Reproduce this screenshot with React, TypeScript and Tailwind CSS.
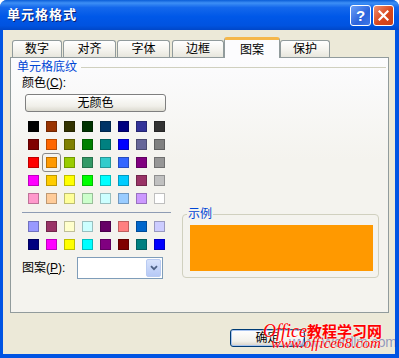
import React from 'react'

const FONT = { fontFamily: '"Liberation Sans", "Noto Sans CJK SC", sans-serif' }

// Excel 56-colour palette, as shown in the 图案 tab
const MAIN: string[][] = [
  ['#000000', '#993300', '#333300', '#003300', '#003366', '#000080', '#333399', '#333333'],
  ['#800000', '#FF6600', '#808000', '#008000', '#008080', '#0000FF', '#666699', '#808080'],
  ['#FF0000', '#FF9900', '#99CC00', '#339966', '#33CCCC', '#3366FF', '#800080', '#969696'],
  ['#FF00FF', '#FFCC00', '#FFFF00', '#00FF00', '#00FFFF', '#00CCFF', '#993366', '#C0C0C0'],
  ['#FF99CC', '#FFCC99', '#FFFF99', '#CCFFCC', '#CCFFFF', '#99CCFF', '#CC99FF', '#FFFFFF'],
]
const CHART: string[][] = [
  ['#9999FF', '#993366', '#FFFFCC', '#CCFFFF', '#660066', '#FF8080', '#0066CC', '#CCCCFF'],
  ['#000080', '#FF00FF', '#FFFF00', '#00FFFF', '#800080', '#800000', '#008080', '#0000FF'],
]

const TABS = [
  { label: '数字', w: 'w-[50px]', ml: 'ml-[9px]' },
  { label: '对齐', w: 'w-[53px]', ml: 'ml-[1px]' },
  { label: '字体', w: 'w-[53px]', ml: 'ml-[1px]' },
  { label: '边框', w: 'w-[52px]', ml: 'ml-[2px]' },
  { label: '图案', w: 'w-[56px]', ml: 'ml-0', active: true },
  { label: '保护', w: 'w-[50px]', ml: 'ml-0' },
]

function Swatch({ color, selected }: { color: string; selected?: boolean }) {
  return (
    <div className="relative w-[11px] h-[11px]">
      <div className="w-full h-full border border-black/25" style={{ backgroundColor: color }} />
      {selected && (
        <div className="absolute -inset-[4px] border border-[#8a8a8a] rounded-[3px]" />
      )}
    </div>
  )
}

function SwatchGrid({ rows, selectedIndex }: { rows: string[][]; selectedIndex?: number }) {
  return (
    <div className="ml-[6px] grid grid-cols-[repeat(8,11px)] gap-[7px]">
      {rows.flat().map((c, i) => (
        <Swatch key={i} color={c} selected={i === selectedIndex} />
      ))}
    </div>
  )
}

export default function App() {
  return (
    <div className="w-[399px] h-[358px] bg-[#0054E3] rounded-t-[7px] flex flex-col overflow-hidden" style={FONT}>
      {/* ── Title bar ─────────────────────────────────────────── */}
      <div className="h-[30px] flex items-center justify-between pl-[7px] pr-[5px] bg-[linear-gradient(to_bottom,#0A5DD8_0%,#3D8FF5_10%,#1468EC_25%,#0058E8_55%,#0053E0_85%,#0047C8_100%)]">
        <span className="text-white text-[13px] font-bold tracking-[1px] [text-shadow:1px_1px_0_#0A1E70]">单元格格式</span>
        <div className="flex gap-[2px]">
          <div className="w-[21px] h-[21px] rounded-[3px] border border-white flex items-center justify-center bg-[linear-gradient(135deg,#6CA0F7,#2B63DC_60%,#3E78E8)]">
            <span className="text-white text-[15px] font-bold leading-none">?</span>
          </div>
          <div className="w-[21px] h-[21px] rounded-[3px] border border-white flex items-center justify-center bg-[linear-gradient(135deg,#F09072,#D9471C_55%,#C8401A)]">
            <svg width="11" height="11" viewBox="0 0 11 11">
              <path d="M1.5 1.5 L9.5 9.5 M9.5 1.5 L1.5 9.5" stroke="white" strokeWidth="2.2" strokeLinecap="square" />
            </svg>
          </div>
        </div>
      </div>

      {/* ── Body ──────────────────────────────────────────────── */}
      <div className="relative ml-[3px] w-[392px] h-[324px] bg-[#ECE9D8] flex flex-col text-[12px] text-black">
        {/* Tabs */}
        <div className="flex items-end h-[20px] mt-[7px]">
          {TABS.map(t => (
            <div
              key={t.label}
              className={`${t.w} ${t.ml} flex items-center justify-center rounded-t-[3px] border-x border-t ${
                t.active
                  ? 'h-[21px] -mb-px relative z-10 bg-[#FCFCFE] border-[#919B9C] border-t-[3px] border-t-[#F5B74B] pt-[1px]'
                  : 'h-[17px] border-[#919B9C] bg-[linear-gradient(to_bottom,#FFFFFF,#F3F2EC_60%,#E7E6DD)]'
              }`}
            >
              {t.label}
            </div>
          ))}
        </div>

        {/* Tab panel */}
        <div className="ml-[7px] w-[379px] h-[256px] border border-[#919B9C] bg-[linear-gradient(to_bottom,#FCFCFE,#F4F3EE_40%)] flex flex-col">
          <div className="flex items-center h-[14px] mt-[2px] pl-[6px] pr-[2px]">
            <span className="text-[#0046D5]">单元格底纹</span>
            <div className="flex-1 h-px bg-[#D0D0BF] ml-[4px]" />
          </div>

          <div className="flex">
            {/* Left: colours */}
            <div className="w-[160px] pl-[11px] flex flex-col">
              <div className="h-[14px] mt-[2px] flex items-center">
                颜色(<span className="underline">C</span>):
              </div>
              <div className="ml-[3px] mt-[4px] w-[141px] h-[18px] rounded-[3px] border border-[#7F7F7F] bg-[linear-gradient(to_bottom,#FFFFFF,#F0EFE9_70%,#DCDAD0)] flex items-center justify-center">
                无颜色
              </div>
              <div className="mt-[9px]">
                <SwatchGrid rows={MAIN} selectedIndex={17} />
              </div>
              <div className="mt-[8px] w-[149px] h-px bg-[#8E9CB4]" />
              <div className="mt-[8px]">
                <SwatchGrid rows={CHART} />
              </div>
              <div className="mt-[7px] flex items-center">
                <span className="w-[55px]">
                  图案(<span className="underline">P</span>):
                </span>
                <div className="w-[86px] h-[22px] border border-[#7F9DB9] bg-white flex justify-end p-[1px]">
                  <div className="w-[15px] h-full rounded-[2px] border border-[#B9CBF2] bg-[linear-gradient(to_bottom,#D8E3FC,#B6C9F6)] flex items-center justify-center">
                    <svg width="8" height="6" viewBox="0 0 8 6">
                      <path d="M1 1.2 L4 4.2 L7 1.2" stroke="#4D6185" strokeWidth="1.8" fill="none" />
                    </svg>
                  </div>
                </div>
              </div>
            </div>

            {/* Right: sample */}
            <div className="ml-[11px] mt-[140px]">
              <div className="relative w-[197px] h-[64px] border border-[#D0D0BF] rounded-[4px] pt-[10px] pl-[7px]">
                <span className="absolute -top-[8px] left-[4px] px-[1px] bg-[#F4F3EE] text-[#0046D5] leading-[14px]">示例</span>
                <div className="w-[183px] h-[46px] bg-[#FF9900]" />
              </div>
            </div>
          </div>
        </div>

        {/* Buttons */}
        <div className="mt-[16px] flex">
          <div className="ml-[227px] w-[75px] h-[18px] rounded-[3px] border border-[#003C74] bg-[linear-gradient(to_bottom,#FFFFFF,#F2F1EB_70%,#D6D0C5)] shadow-[inset_0_0_0_1px_#A8C4F0] flex items-center justify-center">
            确定
          </div>
        </div>

        {/* Site watermark laid over the dialog */}
        <div className="absolute left-[258px] top-[293px] w-[132px] h-[30px] pointer-events-none">
          <div className="absolute left-[28px] top-[12px] whitespace-nowrap text-[14px] leading-none text-[#1D2F9B]/45 tracking-[-0.3px]">
            www.Wordlm.com
          </div>
          <div className="absolute left-[2px] -top-[1px] whitespace-nowrap leading-none text-[#FF0000] [text-shadow:0_0_2px_#ffffff]">
            <span className="italic text-[18px] [font-family:'Liberation_Serif',serif]">Office</span>
            <span className="font-bold text-[15px] [font-family:'Noto_Sans_CJK_SC',sans-serif]">教程学习网</span>
          </div>
          <div className="absolute left-[10px] top-[13px] whitespace-nowrap italic text-[15px] leading-none text-[#FF0000] [font-family:'Liberation_Serif',serif] [text-shadow:0_0_2px_#ffffff]">
            www.office68.com
          </div>
        </div>
      </div>
    </div>
  )
}
